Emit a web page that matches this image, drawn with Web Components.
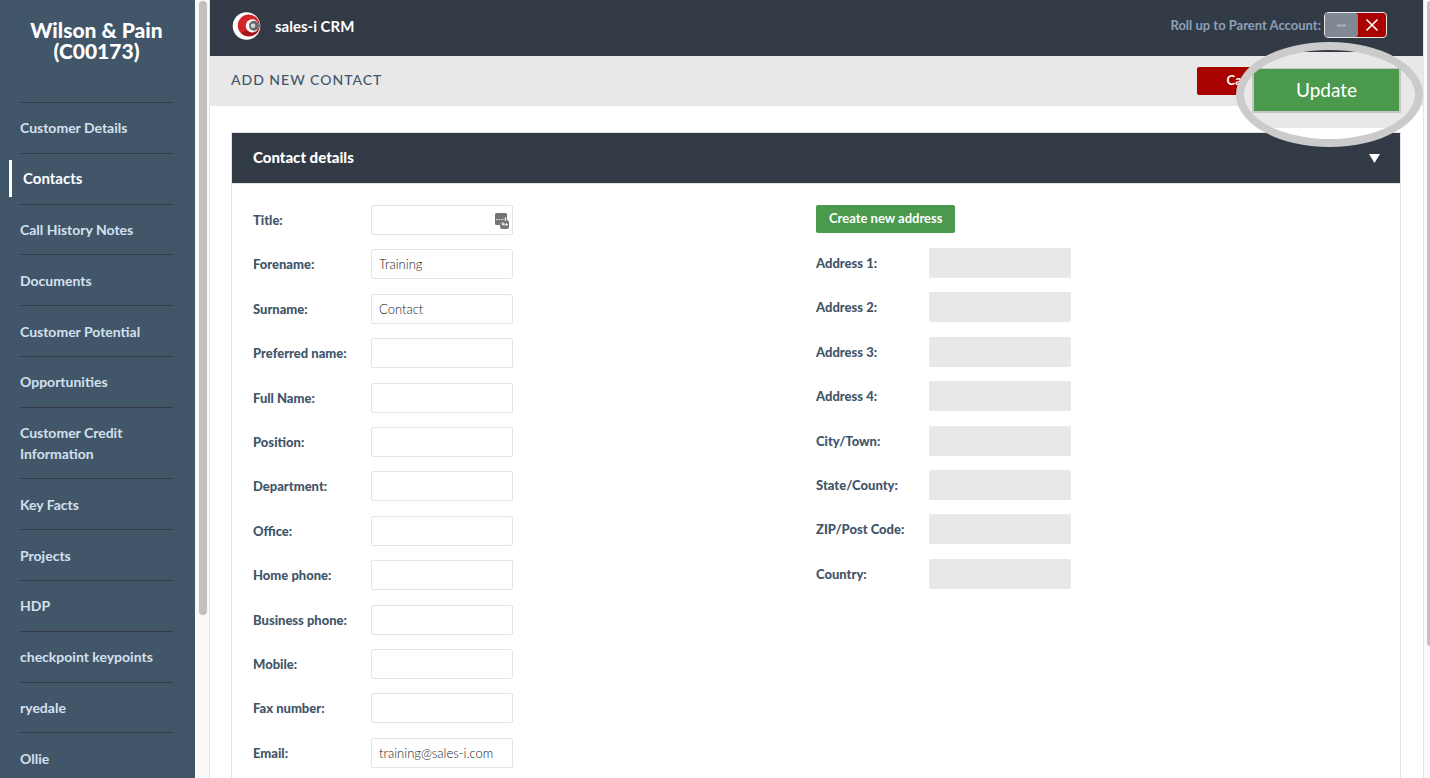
<!DOCTYPE html>
<html lang="en">
<head>
<meta charset="utf-8">
<title>sales-i CRM</title>
<style>
  html, body { margin: 0; height: 100%; }
  body { font-family: Lato, "Open Sans", sans-serif; font-size: 13px; color: #42566a; background: #fff; overflow: hidden; }
</style>
</head>
<body>
<crm-app>
  <crm-sidebar slot="side" heading="Wilson &amp; Pain (C00173)">
    <crm-nav-item>Customer Details</crm-nav-item>
    <crm-nav-item active>Contacts</crm-nav-item>
    <crm-nav-item>Call History Notes</crm-nav-item>
    <crm-nav-item>Documents</crm-nav-item>
    <crm-nav-item>Customer Potential</crm-nav-item>
    <crm-nav-item>Opportunities</crm-nav-item>
    <crm-nav-item>Customer Credit Information</crm-nav-item>
    <crm-nav-item>Key Facts</crm-nav-item>
    <crm-nav-item>Projects</crm-nav-item>
    <crm-nav-item>HDP</crm-nav-item>
    <crm-nav-item>checkpoint keypoints</crm-nav-item>
    <crm-nav-item>ryedale</crm-nav-item>
    <crm-nav-item>Ollie</crm-nav-item>
  </crm-sidebar>
  <crm-header>sales-i CRM</crm-header>
  <crm-toolbar>Add new contact</crm-toolbar>
  <crm-panel heading="Contact details">
    <crm-fields slot="left">
      <crm-field label="Title:" badge></crm-field>
      <crm-field label="Forename:" value="Training"></crm-field>
      <crm-field label="Surname:" value="Contact"></crm-field>
      <crm-field label="Preferred name:"></crm-field>
      <crm-field label="Full Name:"></crm-field>
      <crm-field label="Position:"></crm-field>
      <crm-field label="Department:"></crm-field>
      <crm-field label="Office:"></crm-field>
      <crm-field label="Home phone:"></crm-field>
      <crm-field label="Business phone:"></crm-field>
      <crm-field label="Mobile:"></crm-field>
      <crm-field label="Fax number:"></crm-field>
      <crm-field label="Email:" value="training@sales-i.com"></crm-field>
    </crm-fields>
    <crm-button slot="right">Create new address</crm-button>
    <crm-fields slot="right" class="address">
      <crm-field label="Address 1:" disabled></crm-field>
      <crm-field label="Address 2:" disabled></crm-field>
      <crm-field label="Address 3:" disabled></crm-field>
      <crm-field label="Address 4:" disabled></crm-field>
      <crm-field label="City/Town:" disabled></crm-field>
      <crm-field label="State/County:" disabled></crm-field>
      <crm-field label="ZIP/Post Code:" disabled></crm-field>
      <crm-field label="Country:" disabled></crm-field>
    </crm-fields>
  </crm-panel>
</crm-app>

<script>
const define = (name, html, init) => customElements.define(name, class extends HTMLElement {
  connectedCallback() {
    if (this.shadowRoot) return;
    const root = this.attachShadow({ mode: 'open' });
    root.innerHTML = html;
    if (init) init(this, root);
  }
});

define('crm-app', `
<style>
  :host { display: grid; grid-template-columns: 195px 15px minmax(0, 1fr) 7px; height: 100vh; overflow: hidden; }
  .side, main { min-height: 0; overflow: hidden; }
  .side { background: #42566a; }
  .track { background: #f9f9f9; box-sizing: border-box; overflow: hidden; }
  .track.a { border-right: 1px solid #e4e4e4; padding: 1px 2px 0 4px; }
  .track.b { border-left: 1px solid #e4e4e4; padding: 1px 0 0 3px; }
  .thumb { background: #c1c1c1; border-radius: 4px; height: 79%; }
  .track.b .thumb { height: 83%; border-radius: 4px 0 0 4px; }
</style>
<div class="side"><slot name="side"></slot></div>
<div class="track a"><div class="thumb"></div></div>
<main><slot></slot></main>
<div class="track b"><div class="thumb"></div></div>`);

define('crm-sidebar', `
<style>
  :host { display: block; padding: 19px 22px 0 20px; }
  h1 { margin: 0 0 41px; font-size: 21px; line-height: 21px; font-weight: 900; color: #fff; text-align: center; }
</style>
<h1></h1>
<nav><slot></slot></nav>`, (host, root) => {
  root.querySelector('h1').textContent = host.getAttribute('heading');
});

define('crm-nav-item', `
<style>
  :host { display: block; border-top: 1px solid #323a45; padding: 0.96em 0; font-size: 15px; line-height: 21px; }
  a { display: block; color: #d3e1ee; text-decoration: none; font-weight: 700; font-size: 14px; }
  :host([active]) a { color: #fff; font-size: 15px; border-left: 3px solid #fff; margin: -8px 0 -8px -11px; padding: 8px 0 8px 11px; }
</style>
<a href="#"><slot></slot></a>`);

define('crm-header', `
<style>
  :host { display: flex; align-items: center; height: 56px; box-sizing: border-box; padding: 0 36px 6px 22px; background: #323a45; color: #fff; }
  svg { flex: none; }
  .name { margin-left: 13px; flex: 1; font-size: 15px; line-height: 20px; padding-top: 2px; font-weight: 700; }
  .roll { font-weight: 700; color: #8ca0b9; margin-right: 3px; }
  .toggle { display: flex; box-sizing: border-box; width: 63px; height: 26px; padding: 0; border: 1px solid #e8e8e8; border-radius: 4px; background: #a90000; overflow: hidden; cursor: pointer; }
  .toggle svg { display: block; }
</style>
<svg width="30" height="30" viewBox="0 0 30 30" aria-hidden="true">
  <circle cx="14.500" cy="16" r="13.800" fill="#fff"/>
  <circle cx="16.800" cy="15.500" r="11" fill="#d3232b"/>
  <path d="M9 22.500a11 11 0 0 0 17.500-1.500l-3-3z" fill="#a5161c"/>
  <circle cx="20.300" cy="15.800" r="6.600" fill="#fff"/>
  <circle cx="22" cy="15.800" r="5" fill="#66686b"/>
  <circle cx="21" cy="15.800" r="2.300" fill="#d4d6d8"/>
</svg>
<span class="name"><slot></slot></span>
<span class="roll" id="roll">Roll up to Parent Account:</span>
<button class="toggle" aria-labelledby="roll">
  <svg width="61" height="24" viewBox="0 0 61 24">
    <rect x="-4" width="37" height="24" rx="3" fill="#808893"/>
    <path d="M12 12.500h9" stroke="#aab3bc" stroke-width="2"/>
    <path d="M41.500 6.500l11 11m0-11l-11 11" stroke="#fff" stroke-width="1.600"/>
  </svg>
</button>`);

define('crm-button', `
<style>
  :host { display: block; }
  button { display: block; box-sizing: border-box; height: 28px; min-width: 98px; padding: 0 13px 2px; border: 0; border-radius: 2px; background: #4b994d; color: #fff; font: 700 13px/26px Lato, sans-serif; cursor: pointer; }
  :host([kind="danger"]) button { background: #a90000; }
</style>
<button type="button"><slot></slot></button>`);

define('crm-toolbar', `
<style>
  :host { display: flex; position: relative; align-items: center; justify-content: space-between; height: 50px; box-sizing: border-box; padding: 0 128px 0 21px; background: #e8e8e8; }
  h2 { margin: 0; padding-bottom: 2px; font-size: 14px; line-height: 20px; font-weight: 500; letter-spacing: 1px; text-transform: uppercase; }
  .bar { position: absolute; right: 0; top: -14px; z-index: 2; }
</style>
<h2><slot></slot></h2>
<crm-button kind="danger">Cancel</crm-button>
<crm-lens class="bar">Update</crm-lens>`);

define('crm-lens', `
<style>
  :host { display: flex; justify-content: center; box-sizing: border-box; width: 187px; height: 105px; padding: 18px 6px 0 0; border: 8px solid #cbcbcb; border-radius: 50%; overflow: hidden; background: linear-gradient(#323a45 2px, #e8e8e8 2px 78px, #fff 78px); }
  button { box-sizing: border-box; width: 149px; height: 45px; border: 2px solid #c6c6c6; border-top-width: 1px; background: #4b994d; color: #fff; font: 400 19px/40px Lato, sans-serif; padding: 0; cursor: pointer; }
</style>
<button type="button"><slot></slot></button>`);

define('crm-panel', `
<style>
  :host { display: block; margin: 26px 22px 0 21px; border: 1px solid #e4e4e4; }
  header { display: flex; align-items: center; justify-content: space-between; height: 50px; padding: 0 20px 0 21px; background: #323a45; color: #fff; border-bottom: 1px solid #e4e4e4; }
  h3 { margin: 0; padding-bottom: 2px; font-size: 15px; font-weight: 900; }
  .body { display: grid; grid-template-columns: 1fr 1fr; padding: 21px; }
</style>
<header><h3></h3>
  <svg width="11" height="9" viewBox="0 0 11 9" aria-hidden="true"><path d="M0 0h11L5.500 9z" fill="#fff"/></svg>
</header>
<div class="body"><div><slot name="left"></slot></div><div><slot name="right"></slot></div></div>`, (host, root) => {
  root.querySelector('h3').textContent = host.getAttribute('heading');
});

define('crm-fields', `
<style>
  :host { display: grid; --label: 118px; font-size: 12px; gap: 1.2em; }
  :host(.address) { --label: 113px; margin-top: 15px; }
</style>
<slot></slot>`);

define('crm-field', `
<style>
  :host { display: grid; position: relative; grid-template-columns: var(--label) 142px; align-items: center; font-size: 13px; }
  label { font-weight: 900; line-height: 20px; }
  input { box-sizing: border-box; width: 100%; height: 30px; padding: 0 7px; border: 1px solid #e4e4e4; border-radius: 2px; background: #fff; color: #222; font: 300 13px/20px Lato, sans-serif; outline: 0; }
  input:disabled { background: #e8e8e8; border-color: #e8e8e8; }
  svg { position: absolute; left: calc(var(--label) + 124px); top: 8px; }
</style>
<label for="f"></label><input id="f" type="text">`, (host, root) => {
  root.querySelector('label').textContent = host.getAttribute('label');
  const input = root.querySelector('input');
  input.value = host.getAttribute('value') || '';
  input.disabled = host.hasAttribute('disabled');
  if (host.hasAttribute('badge')) root.innerHTML += `
<svg width="14" height="16" viewBox="0 0 14 16" aria-hidden="true">
  <rect width="12" height="12" rx="1.500" fill="#757575"/>
  <rect x="5" y="7" width="9" height="9" rx="2.500" fill="#757575"/>
  <path d="M1 6.500h1.500M3.500 6.500h1.500M6 6.500h1.500M8.500 6.500h1M10.500 4v4" stroke="#e8e8e8" stroke-width="1.200"/>
  <path d="M9 13V10H7v1.500h2M10 11.500h3M11.500 10v3" fill="none" stroke="#e8e8e8"/>
</svg>`;
});
</script>
</body>
</html>
